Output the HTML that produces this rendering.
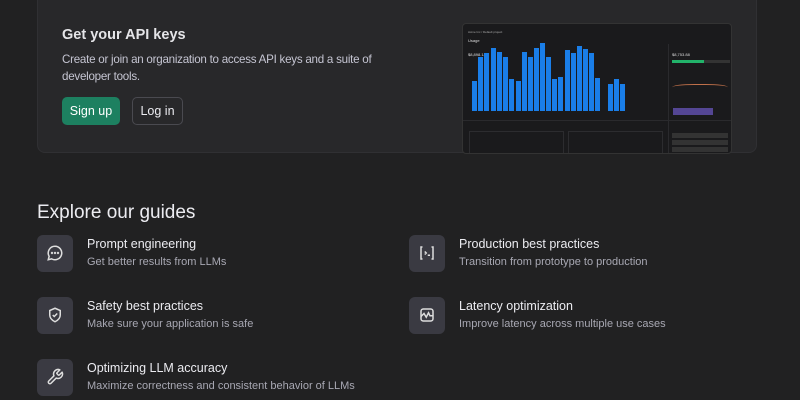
<!DOCTYPE html>
<html><head><style>
*{margin:0;padding:0;box-sizing:border-box}
body{width:800px;height:400px;background:#212122;font-family:"Liberation Sans",sans-serif;overflow:hidden;position:relative;color:#ececf1}
.card{position:absolute;left:37px;top:-10px;width:720px;height:163px;background:#28282a;border-radius:8px;border:1px solid #303033}
.h{position:absolute;left:62px;top:27px;font-size:14.5px;font-weight:bold;color:#e5e5e8}
.p{position:absolute;left:62px;top:51px;width:320px;font-size:11.6px;line-height:17px;color:#c5c5d2;letter-spacing:-0.25px}
.btn{position:absolute;top:97px;height:28px;border-radius:5px;font-size:12.5px;line-height:28px;text-align:center}
.su{left:62px;width:58px;background:#1d8060;color:#fff}
.li{left:132px;width:51px;border:1px solid #4a4a50;color:#ececf1;line-height:26px}
.shot{position:absolute;left:462px;top:23px;width:270px;height:131px;background:#1a1a1c;border-radius:4px;border:1px solid #333;overflow:hidden}
.bar{position:absolute;width:4.6px;background:#1a7ee8}
.g{position:absolute;left:37px;top:202px;font-size:19px;color:#ececf1}
.it{position:absolute}
.ic{position:absolute;left:0;top:0;width:36px;height:37px;background:#3a3a42;border-radius:6px}
.ic svg{position:absolute;left:9px;top:9px}
.t{position:absolute;left:50px;top:2px;font-size:12.5px;white-space:nowrap;color:#ececf1}
.d{position:absolute;left:50px;top:21px;font-size:11px;white-space:nowrap;color:#a8a8b3}
</style></head><body>
<div class="card"></div>
<div class="h">Get your API keys</div>
<div class="p">Create or join an organization to access API keys and a suite of developer tools.</div>
<div class="btn su">Sign up</div>
<div class="btn li">Log in</div>
<div class="shot">
<div style="position:absolute;left:5px;top:6px;font-size:3px;color:#aaa">Acme Inc / Default project</div>
<div style="position:absolute;left:5px;top:14px;font-size:4px;color:#ddd">Usage</div>
<div style="position:absolute;left:5px;top:28px;font-size:4px;color:#ddd">$8,898.14</div>
<div style="position:absolute;left:209px;top:28px;font-size:4px;color:#ddd">$8,753.88</div>
<div style="position:absolute;left:209px;top:36px;width:58px;height:3px;background:#333"></div>
<div style="position:absolute;left:209px;top:36px;width:32px;height:3px;background:#22b36a"></div>
<div style="position:absolute;left:205px;top:20px;width:1px;height:111px;background:#2a2a2d"></div>
<div style="position:absolute;left:0;top:96px;width:270px;height:1px;background:#2a2a2d"></div>
<div style="position:absolute;left:209px;top:60px;width:56px;height:8px;border-top:1px solid #c0704a;border-radius:40%"></div>
<div style="position:absolute;left:210px;top:84px;width:40px;height:7px;background:#6d5ac8;opacity:.7"></div>
<div style="position:absolute;left:209px;top:109px;width:56px;height:5px;background:#333"></div>
<div style="position:absolute;left:209px;top:116px;width:56px;height:5px;background:#333"></div>
<div style="position:absolute;left:209px;top:123px;width:56px;height:5px;background:#333"></div>
<div style="position:absolute;left:6px;top:107px;width:95px;height:24px;border:1px solid #2c2c2f"></div>
<div style="position:absolute;left:105px;top:107px;width:95px;height:24px;border:1px solid #2c2c2f"></div>
</div>
<div style="position:absolute;left:462px;top:23px;">
<div class="bar" style="left:10px;top:58px;height:30px"></div><div class="bar" style="left:16px;top:34px;height:54px"></div><div class="bar" style="left:22px;top:30px;height:58px"></div><div class="bar" style="left:29px;top:25px;height:63px"></div><div class="bar" style="left:35px;top:29px;height:59px"></div><div class="bar" style="left:41px;top:34px;height:54px"></div><div class="bar" style="left:47px;top:56px;height:32px"></div><div class="bar" style="left:54px;top:58px;height:30px"></div><div class="bar" style="left:60px;top:29px;height:59px"></div><div class="bar" style="left:66px;top:34px;height:54px"></div><div class="bar" style="left:72px;top:25px;height:63px"></div><div class="bar" style="left:78px;top:20px;height:68px"></div><div class="bar" style="left:84px;top:34px;height:54px"></div><div class="bar" style="left:90px;top:56px;height:32px"></div><div class="bar" style="left:96px;top:54px;height:34px"></div><div class="bar" style="left:103px;top:27px;height:61px"></div><div class="bar" style="left:109px;top:30px;height:58px"></div><div class="bar" style="left:115px;top:23px;height:65px"></div><div class="bar" style="left:121px;top:26px;height:62px"></div><div class="bar" style="left:127px;top:30px;height:58px"></div><div class="bar" style="left:133px;top:55px;height:33px"></div><div class="bar" style="left:146px;top:61px;height:27px"></div><div class="bar" style="left:152px;top:56px;height:32px"></div><div class="bar" style="left:158px;top:61px;height:27px"></div>
</div>
<div class="g">Explore our guides</div>
<div class="it" style="left:37px;top:235px"><div class="ic"><svg width="18" height="18" viewBox="0 0 24 24" fill="none" stroke="#ddd" stroke-width="2"><path d="M12 3a9 9 0 1 1-4.5 16.8L3 21l1.2-4.5A9 9 0 0 1 12 3z"/><circle cx="8" cy="12" r=".6"/><circle cx="12" cy="12" r=".6"/><circle cx="16" cy="12" r=".6"/></svg></div><div class="t">Prompt engineering</div><div class="d">Get better results from LLMs</div></div>
<div class="it" style="left:37px;top:297px"><div class="ic"><svg width="18" height="18" viewBox="0 0 24 24" fill="none" stroke="#ddd" stroke-width="2"><path d="M12 3l7 3v6c0 4-3 7-7 9-4-2-7-5-7-9V6z"/><path d="M9 12l2 2 4-4"/></svg></div><div class="t">Safety best practices</div><div class="d">Make sure your application is safe</div></div>
<div class="it" style="left:37px;top:359px"><div class="ic"><svg width="18" height="18" viewBox="0 0 24 24" fill="none" stroke="#ddd" stroke-width="2" stroke-linejoin="round"><path d="M14.7 6.3a1 1 0 0 0 0 1.4l1.6 1.6a1 1 0 0 0 1.4 0l3.8-3.8a6 6 0 0 1-7.9 7.9l-6.9 6.9a2.1 2.1 0 0 1-3-3l6.9-6.9a6 6 0 0 1 7.9-7.9z"/></svg></div><div class="t">Optimizing LLM accuracy</div><div class="d">Maximize correctness and consistent behavior of LLMs</div></div>
<div class="it" style="left:409px;top:235px"><div class="ic"><svg width="18" height="18" viewBox="0 0 24 24" fill="none" stroke="#ddd" stroke-width="2"><path d="M6 4H4v16h2M18 4h2v16h-2M9 10l2 2-2 2M13 15h3"/></svg></div><div class="t">Production best practices</div><div class="d">Transition from prototype to production</div></div>
<div class="it" style="left:409px;top:297px"><div class="ic"><svg width="18" height="18" viewBox="0 0 24 24" fill="none" stroke="#ddd" stroke-width="2"><rect x="4" y="4" width="16" height="16" rx="3"/><path d="M4 14l4-4 3 5 3-6 2 4h4"/></svg></div><div class="t">Latency optimization</div><div class="d">Improve latency across multiple use cases</div></div>
</body></html>
